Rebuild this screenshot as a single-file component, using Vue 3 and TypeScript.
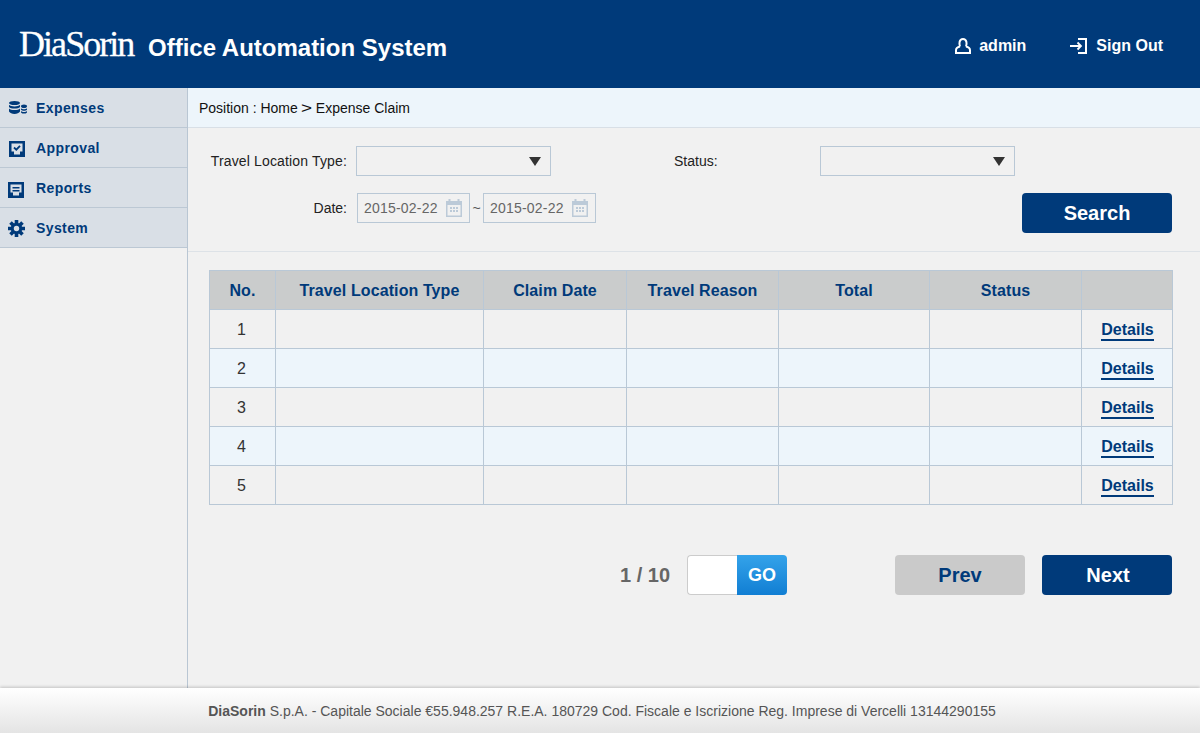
<script setup lang="ts">
const menu = [
  { label: 'Expenses', icon: 'coins' },
  { label: 'Approval', icon: 'check' },
  { label: 'Reports', icon: 'report' },
  { label: 'System', icon: 'gear' },
]
const columns = ['No.', 'Travel Location Type', 'Claim Date', 'Travel Reason', 'Total', 'Status', '']
const widths = [66, 208, 143, 152, 151, 152, 91]
const rows = [1, 2, 3, 4, 5]
</script>

<template>
  <div class="page">
    <header class="top">
      <div class="brand">
        <span class="logo">DiaSorin</span>
        <span class="title">Office Automation System</span>
      </div>
      <nav class="user">
        <span class="user-item user-admin">
          <svg width="16" height="16" viewBox="0 0 16 16" fill="none" stroke="#fff" stroke-width="2">
            <path d="M5 8.500C4 6 4 1 8 1s4 5 3 7.500" />
            <path d="M5 8.500C2.500 9 1 10.300 1 12.300V15h14v-2.700C15 10.300 13.500 9 11 8.500" />
          </svg>
          admin
        </span>
        <span class="user-item user-out">
          <svg width="17" height="16" viewBox="0 0 17 16" fill="none" stroke="#fff" stroke-width="2">
            <path d="M8 1h8v14H8" />
            <path d="M0 8h11" />
            <path d="M7.500 4.500L11 8l-3.500 3.500" stroke-width="1.800" />
          </svg>
          Sign Out
        </span>
      </nav>
    </header>

    <div class="body">
      <aside class="side">
        <div v-for="m in menu" :key="m.label" class="side-row">
          <span class="side-icon">
            <svg v-if="m.icon === 'coins'" class="ic-coins" width="18" height="13" viewBox="0 0 18 13" fill="#003a7a">
              <ellipse cx="5.500" cy="2" rx="5.500" ry="2" />
              <path d="M0 3.800c1 1.100 3 1.600 5.500 1.600S10 4.900 11 3.800v2.200c-1 1.100-3 1.600-5.500 1.600S1 7.100 0 6z" />
              <path d="M0 7.400c1 1.100 3 1.600 5.500 1.600S10 8.500 11 7.400v3.200c-1 1.600-3 2.400-5.500 2.400S1 12.200 0 10.600z" />
              <ellipse cx="15" cy="5.200" rx="3" ry="1.800" />
              <path d="M12 7.200c.7.700 1.800 1 3 1s2.300-.3 3-1v1.600c-.7.700-1.800 1-3 1s-2.300-.3-3-1z" />
              <path d="M12 10c.7.700 1.800 1 3 1s2.300-.3 3-1v1.400c-.7.800-1.800 1.200-3 1.200s-2.300-.4-3-1.200z" />
            </svg>
            <svg v-else-if="m.icon === 'check'" class="ic-check" width="16" height="16" viewBox="0 0 16 16">
              <path fill="#003a7a" d="M0 0h16v16H0z" />
              <path fill="#d9dfe6" d="M2.500 2.500h11v8H11v3H5v-3H2.500z" />
              <path fill="none" stroke="#003a7a" stroke-width="1.800" d="M5 6.500l2.300 2.200L11 4.800" />
            </svg>
            <svg v-else-if="m.icon === 'report'" class="ic-report" width="16" height="16" viewBox="0 0 16 16">
              <path fill="#003a7a" d="M0 0h16v16H0z" />
              <path fill="#d9dfe6" d="M2.500 2.500h11v8H11v3H5v-3H2.500z" />
              <path fill="#003a7a" d="M4.500 5h7v1.500h-7zM4.500 8h7v1.500h-7z" />
            </svg>
            <svg v-else class="ic-gear" width="17" height="17" viewBox="0 0 17 17" fill="none" stroke="#003a7a">
              <path stroke-width="3.600" d="M8.500 0v17M0 8.500h17M2.500 2.500l12 12M14.500 2.500l-12 12" />
              <circle cx="8.500" cy="8.500" r="5.700" fill="#003a7a" stroke="none" />
              <circle cx="8.500" cy="8.500" r="2.700" fill="#d9dfe6" stroke="none" />
            </svg>
          </span>
          <span class="side-label">{{ m.label }}</span>
        </div>
      </aside>

      <main class="main">
        <div class="crumb">Position : Home<span class="crumb-sep">&gt;</span>Expense Claim</div>

        <section class="filters">
          <div class="filter-row">
            <label class="f-label">Travel Location Type:</label>
            <div class="select"><i class="arrow"></i></div>
            <label class="f-status">Status:</label>
            <div class="select"><i class="arrow"></i></div>
          </div>
          <div class="filter-row filter-row-date">
            <label class="f-label f-date">Date:</label>
            <div class="date">
              <span>2015-02-22</span>
              <svg class="cal" width="16" height="18" viewBox="0 0 16 18">
                <path fill="#bccad8" d="M0 2h2.500V0h2v2h7V0h2v2H16v16H0z" />
                <path fill="#f1f1f1" d="M1.500 6h13v10.500h-13z" />
                <path fill="#bccad8" d="M4 8h2v2H4zM7 8h2v2H7zM10 8h2v2h-2zM4 11h2v2H4zM7 11h2v2H7zM10 11h2v2h-2z" />
              </svg>
            </div>
            <span class="tilde">~</span>
            <div class="date">
              <span>2015-02-22</span>
              <svg class="cal" width="16" height="18" viewBox="0 0 16 18">
                <path fill="#bccad8" d="M0 2h2.500V0h2v2h7V0h2v2H16v16H0z" />
                <path fill="#f1f1f1" d="M1.500 6h13v10.500h-13z" />
                <path fill="#bccad8" d="M4 8h2v2H4zM7 8h2v2H7zM10 8h2v2h-2zM4 11h2v2H4zM7 11h2v2H7zM10 11h2v2h-2z" />
              </svg>
            </div>
            <button class="btn btn-dark btn-search">Search</button>
          </div>
        </section>

        <section class="content">
          <table class="grid">
            <colgroup>
              <col v-for="(w, i) in widths" :key="i" :style="{ width: w + 'px' }" />
            </colgroup>
            <thead>
              <tr><th v-for="(c, i) in columns" :key="i">{{ c }}</th></tr>
            </thead>
            <tbody>
              <tr v-for="r in rows" :key="r" :class="{ alt: r % 2 === 0 }">
                <td>{{ r }}</td>
                <td></td><td></td><td></td><td></td><td></td>
                <td class="cell-link"><a class="details">Details</a></td>
              </tr>
            </tbody>
          </table>

          <div class="pager">
            <span class="count">1 / 10</span>
            <div class="go">
              <span class="go-input"></span>
              <span class="go-btn">GO</span>
            </div>
            <button class="btn btn-grey">Prev</button>
            <button class="btn btn-dark">Next</button>
          </div>
        </section>
      </main>
    </div>

    <footer class="foot">
      <b>DiaSorin</b>&nbsp;S.p.A. - Capitale Sociale €55.948.257 R.E.A. 180729 Cod. Fiscale e Iscrizione Reg. Imprese di Vercelli 13144290155
    </footer>
  </div>
</template>

<style scoped>
.page {
  height: 733px;
  display: flex;
  flex-direction: column;
  overflow: hidden;
  background: #f1f1f1;
  font-family: "Liberation Sans", Arial, sans-serif;
  color: #222;
}
.top {
  height: 88px;
  flex: none;
  background: #003a7a;
  color: #fff;
  display: flex;
  align-items: center;
  justify-content: space-between;
  padding: 3px 37px 0 19px;
  box-sizing: border-box;
}
.brand { display: flex; align-items: baseline; margin-top: -4px; }
.logo {
  font-family: "Liberation Serif", serif;
  font-size: 36px;
  letter-spacing: -1.95px;
  -webkit-text-stroke: 0.3px #fff;
  width: 129px;
}
.title { font-size: 24px; font-weight: 700; }
.user { display: flex; align-items: center; font-size: 16px; font-weight: 700; }
.user-item { display: flex; align-items: center; }
.user-admin { gap: 8px; margin-right: 44px; }
.user-out { gap: 9px; }
.body { flex: 1; display: flex; min-height: 0; }
.side {
  width: 187px;
  flex: none;
  border-right: 1px solid #b9c6d3;
}
.side-row {
  height: 39px;
  background: #d9dfe6;
  border-bottom: 1px solid #bcc8d4;
  display: flex;
  align-items: center;
  padding-left: 8px;
}
.side-icon { width: 28px; display: flex; }
.ic-coins { margin-left: 1px; }
.ic-check { margin-left: 1px; transform: translateY(1px); }
.ic-report { transform: translateY(2px); }
.ic-gear { transform: translateY(1px); }
.side-label { color: #003a7a; font-size: 14px; font-weight: 700; letter-spacing: 0.4px; }
.main { flex: 1; display: flex; flex-direction: column; min-width: 0; }
.crumb {
  height: 39px;
  flex: none;
  background: #edf5fb;
  border-bottom: 1px solid #d8dfe6;
  padding-left: 11px;
  display: flex;
  align-items: center;
  font-size: 14px;
  color: #111;
}
.crumb-sep {
  width: 11px;
  margin: 0 4px 0 3px;
  text-align: center;
  transform: scaleX(1.35);
}
.filters {
  height: 124px;
  flex: none;
  border-bottom: 1px solid #dde2e7;
  padding-top: 18px;
  box-sizing: border-box;
  font-size: 14px;
}
.filter-row { display: flex; align-items: center; }
.filter-row-date { margin-top: 17px; align-items: flex-start; }
.f-label { width: 159px; text-align: right; margin-right: 9px; letter-spacing: 0.15px; }
.f-date { margin-right: 10px; line-height: 30px; letter-spacing: 0; }
.f-status { margin-left: 123px; width: 146px; }
.select {
  width: 195px;
  height: 30px;
  box-sizing: border-box;
  border: 1px solid #b9c8d6;
  display: flex;
  align-items: center;
  justify-content: flex-end;
  padding-right: 9px;
}
.arrow {
  width: 0;
  height: 0;
  border-left: 6px solid transparent;
  border-right: 6px solid transparent;
  border-top: 9px solid #333;
}
.date {
  width: 113px;
  height: 30px;
  box-sizing: border-box;
  border: 1px solid #b9c8d6;
  display: flex;
  align-items: center;
  justify-content: space-between;
  padding: 0 7px 0 6px;
  color: #666;
  letter-spacing: 0.2px;
}
.tilde { width: 13px; text-align: center; line-height: 30px; color: #555; }
.btn {
  width: 130px;
  height: 40px;
  border: 0;
  border-radius: 4px;
  font: 700 20px "Liberation Sans", Arial, sans-serif;
  padding: 0;
}
.btn-dark { background: #003a7a; color: #fff; }
.btn-grey { background: #cacaca; color: #003a7a; }
.btn-search { width: 150px; margin-left: auto; margin-right: 28px; }
.content { padding: 18px 27px 0 21px; }
.grid {
  width: 964px;
  border-collapse: collapse;
  table-layout: fixed;
  border: 1px solid #b9c8d6;
  font-size: 16px;
}
.grid th, .grid td {
  border: 1px solid #b9c8d6;
  text-align: center;
  padding: 2px 0 0;
  height: 36px;
}
.grid td:first-child { padding-right: 2px; }
.grid .cell-link { padding-left: 1px; }
.grid th { background: #cacccc; color: #003a7a; font-weight: 700; letter-spacing: 0.1px; }
.grid td { color: #333; }
.grid .alt td { background: #edf5fb; }
.details {
  color: #003a7a;
  font-weight: 700;
  border-bottom: 2px solid #003a7a;
  padding-bottom: 1px;
}
.pager {
  display: flex;
  align-items: center;
  margin-top: 50px;
  padding-left: 411px;
}
.count { color: #666; font-size: 20px; font-weight: 700; width: 67px; }
.go { display: flex; width: 100px; height: 40px; margin-right: 108px; }
.go-input {
  width: 50px;
  box-sizing: border-box;
  background: #fff;
  border: 1px solid #ccc;
  border-right: 0;
  border-radius: 4px 0 0 4px;
}
.go-btn {
  width: 50px;
  background: linear-gradient(#34a3ea, #117ed3);
  color: #fff;
  border-radius: 0 4px 4px 0;
  font-size: 18px;
  font-weight: 700;
  display: flex;
  align-items: center;
  justify-content: center;
}
.pager .btn-dark { margin-left: 17px; padding-left: 2px; }
.foot {
  height: 45px;
  flex: none;
  box-sizing: border-box;
  background: linear-gradient(#fff, #e4e4e4);
  box-shadow: 0 -1px 3px rgba(0, 0, 0, 0.2);
  display: flex;
  align-items: center;
  justify-content: center;
  font-size: 14px;
  color: #555;
  padding-left: 4px;
  position: relative;
}
</style>

<style>
body { margin: 0; }
</style>
